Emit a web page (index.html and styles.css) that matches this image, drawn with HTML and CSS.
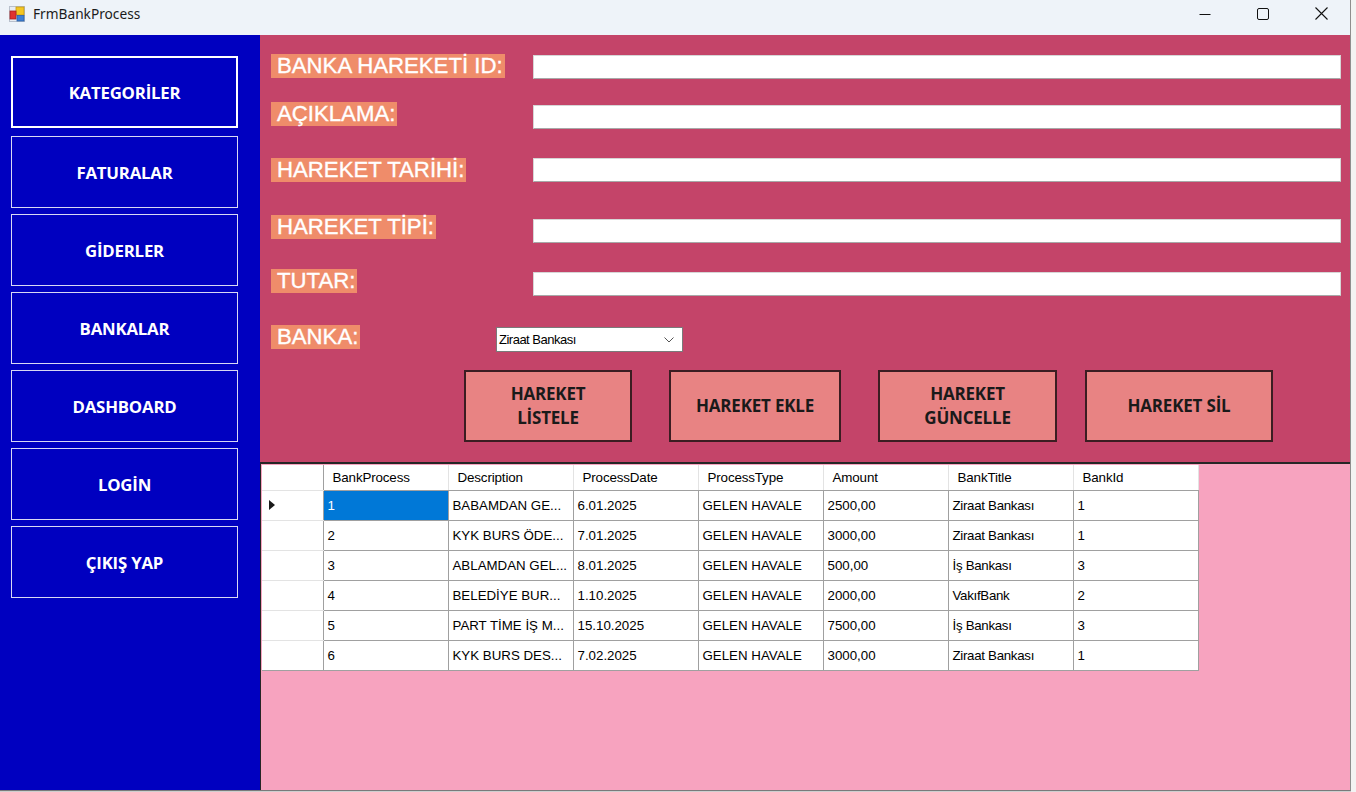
FILE: index.html
```html
<!DOCTYPE html>
<html lang="tr">
<head>
<meta charset="utf-8">
<title>FrmBankProcess</title>
<link rel="stylesheet" href="styles.css">
</head>
<body>
<div class="screen">
  <div class="window">
    <header class="titlebar">
      <svg class="app-icon" width="16" height="16" viewBox="0 0 16 16">
        <rect x="0.5" y="0.5" width="15" height="15" fill="#e8ecf2" stroke="#b8c0cc"/>
        <rect x="7" y="1" width="8" height="8" fill="#f3c623" stroke="#c79a10" stroke-width="0.8"/>
        <rect x="1" y="5" width="6" height="8" fill="#e0322f" stroke="#a82020" stroke-width="0.8"/>
        <rect x="8" y="9.5" width="7" height="5.5" fill="#3d7fd6" stroke="#2a5fa8" stroke-width="0.8"/>
      </svg>
      <span class="title">FrmBankProcess</span>
      <div class="controls">
        <div class="ctl"><svg width="12" height="12" viewBox="0 0 12 12"><path d="M0.5 6.5h11" stroke="#111" stroke-width="1"/></svg></div>
        <div class="ctl"><svg width="12" height="12" viewBox="0 0 12 12"><rect x="0.5" y="0.5" width="11" height="11" rx="1.5" fill="none" stroke="#111" stroke-width="1"/></svg></div>
        <div class="ctl"><svg width="13" height="13" viewBox="0 0 13 13"><path d="M0.5 0.5l12 12M12.5 0.5l-12 12" stroke="#111" stroke-width="1.1"/></svg></div>
      </div>
    </header>
    <div class="client">
      <nav class="sidebar">
        <button class="nav-btn active">KATEGORİLER</button>
        <button class="nav-btn">FATURALAR</button>
        <button class="nav-btn">GİDERLER</button>
        <button class="nav-btn">BANKALAR</button>
        <button class="nav-btn">DASHBOARD</button>
        <button class="nav-btn">LOGİN</button>
        <button class="nav-btn">ÇIKIŞ YAP</button>
      </nav>
      <main class="content">
        <section class="form-panel">
          <div class="form-grid">
            <span class="label">BANKA HAREKETİ ID:</span>
            <div class="text-input off1"></div>
            <span class="label">AÇIKLAMA:</span>
            <div class="text-input off3"></div>
            <span class="label">HAREKET TARİHİ:</span>
            <div class="text-input off0"></div>
            <span class="label">HAREKET TİPİ:</span>
            <div class="text-input off4"></div>
            <span class="label">TUTAR:</span>
            <div class="text-input off3"></div>
            <span class="label label-short">BANKA:</span>
            <div class="combo">
              <span class="combo-text">Ziraat Bankası</span>
              <svg class="combo-arrow" width="10" height="6" viewBox="0 0 10 6"><path d="M0.5 0.5l4.5 4.5 4.5-4.5" fill="none" stroke="#555" stroke-width="1"/></svg>
            </div>
          </div>
          <div class="actions">
            <button class="act-btn w1">HAREKET<br>LİSTELE</button>
            <button class="act-btn w2">HAREKET EKLE</button>
            <button class="act-btn w3">HAREKET<br>GÜNCELLE</button>
            <button class="act-btn w4">HAREKET SİL</button>
          </div>
        </section>
        <section class="grid-panel">
          <table class="grid">
            <colgroup>
              <col class="c-rh"><col class="c"><col class="c"><col class="c"><col class="c"><col class="c"><col class="c"><col class="c">
            </colgroup>
            <thead>
              <tr>
                <th class="corner"></th>
                <th>BankProcess</th><th>Description</th><th>ProcessDate</th><th>ProcessType</th><th>Amount</th><th>BankTitle</th><th>BankId</th>
              </tr>
            </thead>
            <tbody>
              <tr><td class="rh"><span class="cur"></span></td><td class="sel">1</td><td>BABAMDAN GE...</td><td>6.01.2025</td><td>GELEN HAVALE</td><td>2500,00</td><td class="nar">Ziraat Bankası</td><td>1</td></tr>
              <tr><td class="rh"></td><td>2</td><td>KYK BURS ÖDE...</td><td>7.01.2025</td><td>GELEN HAVALE</td><td>3000,00</td><td class="nar">Ziraat Bankası</td><td>1</td></tr>
              <tr><td class="rh"></td><td>3</td><td>ABLAMDAN GEL...</td><td>8.01.2025</td><td>GELEN HAVALE</td><td>500,00</td><td class="nar">İş Bankası</td><td>3</td></tr>
              <tr><td class="rh"></td><td>4</td><td>BELEDİYE BUR...</td><td>1.10.2025</td><td>GELEN HAVALE</td><td>2000,00</td><td class="nar">VakıfBank</td><td>2</td></tr>
              <tr><td class="rh"></td><td>5</td><td>PART TİME İŞ M...</td><td>15.10.2025</td><td>GELEN HAVALE</td><td>7500,00</td><td class="nar">İş Bankası</td><td>3</td></tr>
              <tr><td class="rh"></td><td>6</td><td>KYK BURS DES...</td><td>7.02.2025</td><td>GELEN HAVALE</td><td>3000,00</td><td class="nar">Ziraat Bankası</td><td>1</td></tr>
            </tbody>
          </table>
        </section>
      </main>
    </div>
  </div>
  <div class="behind"></div>
</div>
</body>
</html>
```

FILE: styles.css
```css
* { box-sizing: border-box; }

body {
  margin: 0;
  width: 1356px;
  height: 792px;
  overflow: hidden;
  background: #cfcfcf;
  font-family: "Liberation Sans", Arial, sans-serif;
}

.screen {
  display: flex;
  height: 792px;
}

.window {
  width: 1351px;
  height: 791px;
  display: flex;
  flex-direction: column;
  border-right: 1px solid #8e8e8e;
  border-bottom: 1px solid #7a7a7a;
}

.behind {
  flex: 1;
  background: #f3f3f3;
}

/* Title bar */
.titlebar {
  height: 35px;
  flex: none;
  display: flex;
  align-items: center;
  padding-bottom: 8px;
  background: #eef3f9;
}

.app-icon {
  margin-left: 9px;
  flex: none;
}

.title {
  margin-left: 8px;
  font-family: "Noto Sans", "Open Sans", sans-serif;
  font-size: 13.7px;
  color: #1b1b1b;
}

.controls {
  margin-left: auto;
  display: flex;
}

.ctl {
  width: 58px;
  height: 27px;
  display: flex;
  align-items: center;
  justify-content: center;
}

/* Client area */
.client {
  flex: 1;
  display: flex;
  min-height: 0;
}

.sidebar {
  width: 260px;
  flex: none;
  background: #0000c0;
  padding: 21px 0 0 11px;
  display: flex;
  flex-direction: column;
  gap: 6px;
}

.nav-btn {
  width: 227px;
  height: 72px;
  flex: none;
  margin: 0;
  padding: 0;
  background: #0000c0;
  border: 1px solid #d8d8f4;
  color: #ffffff;
  font-family: "Open Sans", "Noto Sans", sans-serif;
  font-weight: 700;
  font-size: 16.8px;
  letter-spacing: -0.2px;
}

.nav-btn.active {
  border: 2px solid #ffffff;
  margin-bottom: 2px;
}

.content {
  flex: 1;
  display: flex;
  flex-direction: column;
  min-width: 0;
}

/* Form panel */
.form-panel {
  height: 427px;
  flex: none;
  background: #c44469;
  padding: 19px 9px 0 11px;
}

.form-grid {
  display: grid;
  grid-template-columns: 225px 37px 808px;
  grid-template-rows: 48px 56px 57px 54px 56px 45px;
  align-items: start;
}

.label {
  grid-column: 1 / 3;
  justify-self: start;
  background: #ef8c6a;
  color: #ffffff;
  font-size: 22.2px;
  line-height: 24px;
  height: 24px;
  padding: 0 2px 0 6px;
  white-space: nowrap;
  -webkit-text-stroke: 0.35px #ffffff;
}

.label-short {
  grid-column: 1;
}

.text-input {
  grid-column: 3;
  height: 24px;
  background: #ffffff;
  border: 1px solid #d6d6d6;
  border-bottom-color: #a8a8a8;
}

.off0 { margin-top: 0; }
.off1 { margin-top: 1px; }
.off3 { margin-top: 3px; }
.off4 { margin-top: 4px; }

.combo {
  grid-column: 2 / 4;
  justify-self: start;
  margin-top: 2px;
  width: 187px;
  height: 25px;
  background: #ffffff;
  border: 1px solid #7a7a7a;
  display: flex;
  align-items: center;
  padding: 0 8px 0 2px;
}

.combo-text {
  font-size: 13px;
  letter-spacing: -0.5px;
  color: #000;
}

.combo-arrow {
  margin-left: auto;
}

.actions {
  display: flex;
  margin-left: 193px;
}

.act-btn {
  flex: none;
  height: 72px;
  margin: 0;
  padding: 0;
  background: #e88383;
  border: 2px solid #3b1d22;
  color: #1a1a1a;
  font-family: "Open Sans", "Noto Sans", sans-serif;
  font-weight: 700;
  font-size: 17px;
  line-height: 24px;
  letter-spacing: -0.2px;
}

.w1 { width: 168px; }
.w2 { width: 172px; margin-left: 37px; }
.w3 { width: 179px; margin-left: 37px; }
.w4 { width: 188px; margin-left: 28px; }

/* Grid panel */
.grid-panel {
  flex: 1;
  background: #f7a3bf;
  border-top: 2px solid #262626;
  border-left: 1px solid #262626;
  padding: 1px 0 0 1px;
}

.grid {
  border-collapse: collapse;
  table-layout: fixed;
  width: 936px;
  font-size: 13.3px;
  color: #000;
}

.c-rh { width: 61px; }
.c { width: 125px; }

.grid th {
  height: 25px;
  background: #ffffff;
  font-weight: normal;
  text-align: left;
  padding: 0 0 0 9px;
  font-size: 13.4px;
  letter-spacing: -0.15px;
  border-right: 1px solid #e3e3e3;
  border-bottom: 1px solid #a0a0a0;
  white-space: nowrap;
  overflow: hidden;
}

.grid th.corner {
  border-bottom: 1px solid #e3e3e3;
  border-right: 1px solid #a0a0a0;
}

.grid td {
  height: 30px;
  background: #ffffff;
  border: 1px solid #a0a0a0;
  padding: 0 0 0 4px;
  white-space: nowrap;
  overflow: hidden;
}

.grid td.rh {
  border-left: none;
  border-top: 1px solid #e3e3e3;
  border-bottom: 1px solid #e3e3e3;
  padding-left: 7px;
}

.grid tbody tr:last-child td.rh {
  border-bottom: 1px solid #a0a0a0;
}

.grid td.sel {
  background: #0078d7;
  color: #ffffff;
}

.grid td.nar {
  letter-spacing: -0.3px;
}

.cur {
  display: block;
  width: 0;
  height: 0;
  border-left: 6px solid #1a1a1a;
  border-top: 5px solid transparent;
  border-bottom: 5px solid transparent;
}
```
